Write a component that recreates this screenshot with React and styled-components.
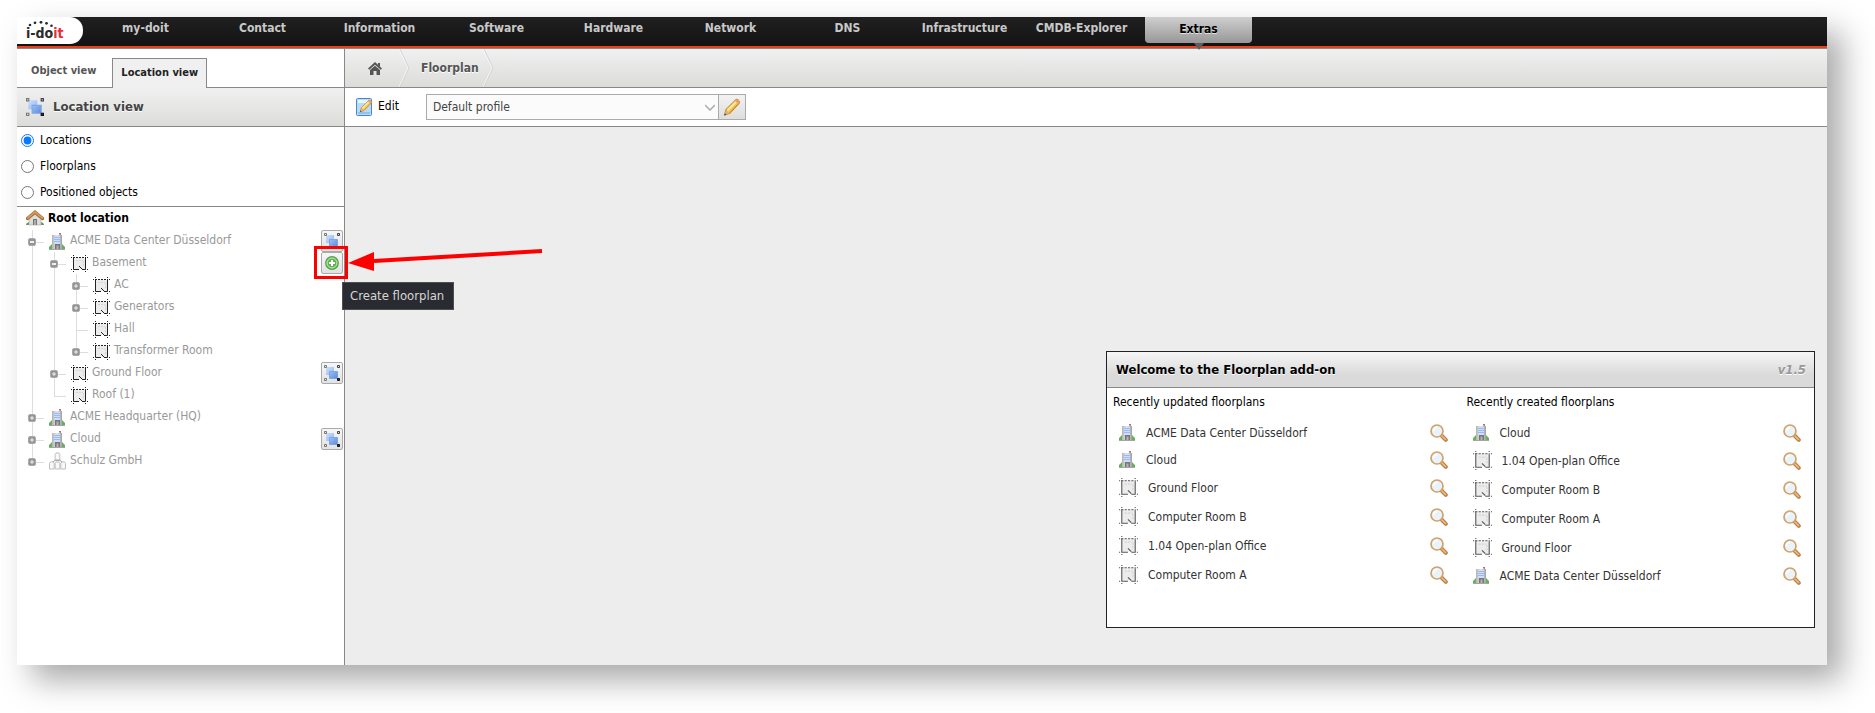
import React, { useState } from "react";
import styled, { createGlobalStyle, css } from "styled-components";

const GlobalStyle = createGlobalStyle`
  *, *::before, *::after { box-sizing: border-box; }
  body {
    margin: 0;
    background: #fff;
    color: #000;
    font: 12px/16px "DejaVu Sans Condensed", "DejaVu Sans", Tahoma, sans-serif;
  }
  button, select, input { font: inherit; color: inherit; }
  ul { list-style: none; margin: 0; padding: 0; }
  a { color: inherit; text-decoration: none; }
  svg { display: block; flex: none; }
`;

const line = "#888";
const softGradient = "linear-gradient(#f0f0f0, #dcdcda)";

/* ---------- frame ---------- */

const Frame = styled.div`
  display: flex;
  flex-direction: column;
  min-height: calc(100vh - 65px);
  margin: 17px 48px 48px 17px;
  background: #fff;
  box-shadow: 15px 15px 30px rgba(0, 0, 0, 0.34);
`;

const Columns = styled.div`
  display: flex;
  flex: 1;
`;

/* ---------- top navigation ---------- */

const TopBar = styled.header`
  position: relative;
  z-index: 2;
  display: flex;
  height: 32px;
  background: linear-gradient(#202020, #121212);
  border-bottom: 1px solid ${line};
  box-shadow: inset 0 -2px 0 #e8401c;
`;

const LogoPlate = styled.a`
  width: 66px;
  height: 27px;
  margin-right: 4px;
  padding: 4px 0 0 9px;
  border-radius: 0 13px 13px 0;
  background: #fff;
  display: grid;
  grid-template-rows: 4px 16px;
`;

const LogoText = styled.span`
  font: bold 14px/16px "DejaVu Sans Condensed", sans-serif;
  color: #2b2b2b;
  em { font-style: normal; color: #ee2a35; }
`;

const Nav = styled.nav`
  display: flex;
  align-items: flex-start;
  gap: 10px;
  padding-left: 5px;
`;

const NavItem = styled.a`
  position: relative;
  width: 107px;
  height: 26px;
  line-height: 23px;
  text-align: center;
  font-weight: bold;
  color: #c8c8c8;
  white-space: nowrap;
  ${(p) =>
    p.$active &&
    css`
      line-height: 25px;
      color: #000;
      text-shadow: 0 1px 0 #e4e4e4;
      border-radius: 0 0 4px 4px;
      background: linear-gradient(#cfcfcf, #979797);
      &::after {
        content: "";
        position: absolute;
        left: 50%;
        top: 100%;
        margin-left: -5px;
        border: 5px solid transparent;
        border-top: 7px solid #5d5d5d;
        border-bottom: 0;
      }
    `}
`;

/* ---------- sidebar ---------- */

const Sidebar = styled.aside`
  position: relative;
  z-index: 1;
  flex: none;
  width: 328px;
  border-right: 1px solid ${line};
  background: #fff;
`;

const Tabs = styled.div`
  display: flex;
  align-items: flex-end;
  height: 39px;
  border-bottom: 1px solid ${line};
`;

const Tab = styled.button`
  height: 30px;
  margin-bottom: -1px;
  padding: 0 15px 5px 13px;
  border: 1px solid transparent;
  border-bottom: 0;
  background: none;
  font-size: 11px;
  font-weight: bold;
  color: #555;
  ${(p) =>
    p.$active &&
    css`
      padding: 0 8px 2px;
      border-color: ${line};
      background: #f0f0f0;
      color: #222;
    `}
`;

const SectionTitle = styled.h2`
  display: flex;
  align-items: center;
  gap: 9px;
  height: 39px;
  margin: 0;
  padding: 0 9px;
  border-bottom: 1px solid ${line};
  background: ${softGradient};
  font-size: 13px;
  line-height: 16px;
  color: #444;
  text-shadow: 0 1px 0 #fff;
`;

const FilterList = styled.div`
  padding: 0 0 1px 4px;
  border-bottom: 1px solid ${line};
`;

const FilterOption = styled.label`
  display: flex;
  align-items: center;
  gap: 6px;
  height: 26px;
  input { width: 13px; height: 13px; margin: 0; accent-color: #0b79ff; }
`;

const Root = styled.div`
  display: flex;
  align-items: center;
  gap: 4px;
  height: 22px;
  padding-left: 9px;
  font-weight: bold;
`;

const Tree = styled.ul`
  padding: 1px 1px 0 10px;
`;

const TreeRow = styled.li`
  display: flex;
  align-items: center;
  height: 22px;
  color: #999;
`;

/* Guide lines beside a node: a vertical stroke, a branch, or the last corner */
const guideImages = {
  pass: "linear-gradient(#ddd, #ddd)",
  tee: "linear-gradient(#ddd, #ddd), linear-gradient(#ddd, #ddd)",
  end: "linear-gradient(#ddd, #ddd), linear-gradient(#ddd, #ddd)",
};

const Guide = styled.span`
  flex: none;
  display: flex;
  width: 22px;
  height: 22px;
  padding: 8px 0 0 1px;
  background-image: ${(p) => guideImages[p.$kind]};
  background-repeat: no-repeat;
  background-position: 5px 0, 5px 12px;
  background-size: 1px ${(p) => (p.$kind === "end" ? "13px" : "22px")}, 12px 1px;
`;

const Expander = styled.button`
  display: grid;
  place-items: center;
  width: 8px;
  height: 8px;
  padding: 0;
  border: 1px solid #aaa;
  border-radius: 2px;
  background: #949494;
`;

const NodeLabel = styled.a`
  margin-left: 4px;
  margin-right: auto;
  line-height: 20px;
  height: 22px;
`;

const ActionSlot = styled.span`
  position: relative;
  flex: none;
`;

const IconButton = styled.button`
  display: grid;
  place-items: center;
  width: 22px;
  height: 22px;
  padding: 0;
  border: 1px solid #aaa;
  border-radius: 2px;
  background: linear-gradient(#f6f6f6, #e2e2e2);
`;

const Marker = styled.span`
  position: absolute;
  inset: -6px -5px -5px -7px;
  border: 3px solid #fe0000;
`;

const Arrow = styled.svg`
  position: absolute;
  left: 27px;
  top: -6px;
`;

const Tooltip = styled.span`
  position: absolute;
  left: 21px;
  top: 30px;
  padding: 4px 9px 4px 7px;
  border: 1px solid #4c4e52;
  background: #292b30;
  color: #d6d6d6;
  font-size: 13px;
  line-height: 18px;
  white-space: nowrap;
`;

/* ---------- main area ---------- */

const Main = styled.main`
  flex: 1;
  display: flex;
  flex-direction: column;
  min-width: 0;
  background: #ededed;
`;

const Breadcrumbs = styled.nav`
  display: flex;
  align-items: center;
  height: 39px;
  padding-left: 23px;
  border-bottom: 1px solid ${line};
  background: ${softGradient};
  font-weight: bold;
  color: #555;
  text-shadow: 0 1px 0 #fff;
`;

const Crumb = styled.a`
  display: flex;
  align-items: center;
  gap: ${(p) => p.$gap}px;
  margin-right: 11px;
  span { margin-bottom: 1px; }
`;

const Toolbar = styled.div`
  display: flex;
  align-items: center;
  gap: 27px;
  height: 39px;
  padding-left: 11px;
  border-bottom: 1px solid ${line};
  background: #fff;
`;

const EditButton = styled.button`
  display: flex;
  align-items: center;
  gap: 5px;
  height: 26px;
  padding: 0;
  border: 0;
  background: none;
  span { margin-bottom: 2px; }
`;

const ProfilePicker = styled.div`
  display: flex;
  height: 26px;
  border: 1px solid #aaa;
`;

const SelectBox = styled.div`
  display: grid;
  align-items: center;
  > * { grid-area: 1 / 1; }
  > svg { justify-self: end; margin-right: 3px; pointer-events: none; }
`;

const ProfileSelect = styled.select`
  width: 291px;
  height: 24px;
  padding: 0 24px 0 6px;
  border: 0;
  border-radius: 0;
  appearance: none;
  background: #fbfbfb;
  color: #444;
`;

const ProfileEdit = styled.button`
  display: grid;
  place-items: center;
  width: 27px;
  height: 24px;
  padding: 0;
  border: 0;
  border-left: 1px solid #aaa;
  background: linear-gradient(#f2f2f2, #dedede);
`;

const Canvas = styled.div`
  flex: 1;
  display: flex;
  align-items: flex-end;
  justify-content: flex-end;
  padding: 0 12px 37px;
`;

const Welcome = styled.section`
  width: 709px;
  border: 1px solid #222;
  background: #fff;
`;

const WelcomeHead = styled.header`
  display: flex;
  justify-content: space-between;
  align-items: center;
  height: 36px;
  padding: 0 8px 0 9px;
  border-bottom: 1px solid ${line};
  background: linear-gradient(#f6f6f6, #dadada 65%);
  font-size: 13px;
  text-shadow: 0 1px 0 #fff;
  h1 { margin: 0; font-size: 13px; line-height: 16px; }
  em { font-weight: bold; color: #999; }
`;

const WelcomeColumns = styled.div`
  display: grid;
  grid-template-columns: 1fr 1fr;
  padding-bottom: 38px;
`;

const RecentTitle = styled.h3`
  margin: 0;
  padding: 6px 6px 9px;
  font-size: 12px;
  font-weight: normal;
  line-height: 16px;
`;

const RecentRow = styled.li`
  display: flex;
  align-items: center;
  gap: 10px;
  height: ${(p) => (p.$room ? 29 : 27)}px;
  padding: 0 13px 0 12px;
  color: #333;
  a { margin-right: auto; }
`;

const PlainButton = styled.button`
  padding: 0;
  border: 0;
  background: none;
`;

/* ---------- drawings ---------- */

const BuildingIcon = () => (
  <svg width="17" height="17" viewBox="0 0 17 17" aria-hidden="true">
    <defs>
      <linearGradient id="wall" x1="0" x2="1">
        <stop offset="0" stopColor="#b4b4b4" />
        <stop offset=".5" stopColor="#e4e6ea" />
        <stop offset="1" stopColor="#a0a0a0" />
      </linearGradient>
    </defs>
    <path d="M0 16v-2l3-3v5zM16 16v-2l-3-3v5z" fill="#66b05c" />
    <path d="M3 2h10v14H3z" fill="url(#wall)" />
    <path d="M0 16h16v1H0z" fill="#a5a5a5" />
    <path d="M5 3h6v8H5z" fill="#cfdffb" />
    <path d="M5 4.500h6M5 6.500h6M5 8.500h6" stroke="#98b9f1" />
    <path d="M6 11h5v5H6z" fill="#777" />
    <path d="M7.500 12.500h2V16h-2z" fill="#b5b5b5" />
    <path d="M11.500 2V0" stroke="#999" />
    <path d="M10 0h1.500v1.500H10z" fill="#d9534f" />
  </svg>
);

const RoomIcon = ({ size = 17, color = "#222" }) => (
  <svg width={size} height={size} viewBox="0 0 17 17" aria-hidden="true">
    <path d="M3 3h11v11H3z" fill="#ececec" />
    <path d="M2.500 2v12.500H8M11 14.500h3.500V3" fill="none" stroke={color} />
    <path d="M2 2.500h13" stroke={color} strokeDasharray="2 1" />
    <path d="M8 11l3 3" stroke={color} fill="none" />
    <path d="M5 5.500h7M12.500 6v5" stroke="#d4d4d4" strokeDasharray="2 1" />
    <path
      d="M2 0h1v1H2zM14 0h1v1h-1zM0 2h1v1H0zM16 2h1v1h-1zM0 14h1v1H0zM16 14h1v1h-1zM2 16h1v1H2zM14 16h1v1h-1z"
      fill={color}
    />
  </svg>
);

const ClusterIcon = () => (
  <svg width="17" height="18" viewBox="0 0 18 18" aria-hidden="true" fill="#f8f8f8" stroke="#bbb">
    <path d="M6.500 8.500V2l1-1.500h3l1 1.500v6.500z" />
    <path d="M4 10l3-2h4l3 2" fill="none" stroke="#999" />
    <path d="M.5 17.500v-6l1-1.500h3l1 1.500v6zM6.500 17.500v-6l1-1.500h3l1 1.500v6zM12.500 17.500v-6l1-1.500h3l1 1.500v6z" />
  </svg>
);

const RootIcon = () => (
  <svg width="18" height="16" viewBox="0 0 18 16" aria-hidden="true">
    <path d="M0 15c0-2 2-3 4-3h10c2 0 4 1 4 3z" fill="#5d9c4c" />
    <path d="M3 8l6-5 6 5v7H3z" fill="#dcdcdc" stroke="#aaa" strokeWidth=".6" />
    <path d="M7 9h4v6H7z" fill="#777" />
    <path d="M8 10h2v5H8z" fill="#aaa" />
    <path d="M1.500 8.500L9 2.300l7.500 6.200" fill="none" stroke="#9a6733" strokeWidth="3.400" strokeLinecap="round" />
    <path d="M1.800 8L9 2l7.200 6" fill="none" stroke="#d49a5c" strokeWidth="2" strokeLinecap="round" />
  </svg>
);

const ShapesIcon = ({ size = 16 }) => (
  <svg width={size} height={size} viewBox="0 0 16 16" aria-hidden="true">
    <defs>
      <linearGradient id="shapeBack" x1="0" y1="0" x2="1" y2="1">
        <stop offset="0" stopColor="#cfe0ff" />
        <stop offset="1" stopColor="#8fb4f0" />
      </linearGradient>
      <linearGradient id="shapeFront" x1="0" y1="0" x2="1" y2="1">
        <stop offset="0" stopColor="#9dbff6" />
        <stop offset="1" stopColor="#5c8bdb" />
      </linearGradient>
    </defs>
    <path d="M2 2h8v8H2z" fill="url(#shapeBack)" />
    <path d="M5.500 6.500h8v7h-8z" fill="url(#shapeFront)" stroke="#7da6e8" />
    <path d="M.5.5h2v2h-2zM.5 13.500h2v2h-2z" fill="#eee" stroke="#777" />
    <path d="M13.500.5h2v2h-2z" fill="#ddd" stroke="#444" />
    <path d="M13.500 13.500h2v2h-2z" fill="#333" stroke="#111" />
  </svg>
);

const AddIcon = () => (
  <svg width="14" height="14" viewBox="0 0 14 14" aria-hidden="true">
    <circle cx="7" cy="7" r="6.300" fill="#8ccf7c" stroke="#54a048" strokeWidth="1.200" />
    <circle cx="7" cy="7" r="4.800" fill="#62b053" stroke="#c5e8bb" strokeWidth=".8" />
    <path d="M7 4v6M4 7h6" stroke="#fff" strokeWidth="2" />
  </svg>
);

const PencilShape = () => (
  <g>
    <path d="M1.500 15l1-4.500L11.500 1.500c1-1 4 1.500 3 3L6 13.500z" fill="#f2c14e" stroke="#c98a2d" />
    <path d="M4 11l8-8" stroke="#fde79a" strokeWidth="2" />
    <path d="M1.200 15.300l1.300-4.500 3 3z" fill="#dcae7e" />
    <path d="M1 15.500l.7-2 1.400 1.300z" fill="#444" />
    <path d="M11.500 1.500c1-1 4 1.500 3 3l-1 1-3-3z" fill="#e6a469" />
  </g>
);

const PencilIcon = () => (
  <svg width="18" height="18" viewBox="0 0 16 16" aria-hidden="true">
    <PencilShape />
  </svg>
);

const EditIcon = () => (
  <svg width="17" height="18" viewBox="0 0 17 18" aria-hidden="true">
    <rect x=".5" y=".5" width="15" height="17" rx="1" fill="#b7dcfa" stroke="#4a86cf" />
    <path d="M2 2h12v3H2z" fill="#e6f4ff" />
    <path d="M2 14h12v2H2z" fill="#8cc4f2" />
    <g transform="translate(3 1) scale(.85)">
      <PencilShape />
    </g>
  </svg>
);

const LensIcon = () => (
  <svg width="18" height="18" viewBox="0 0 18 18" aria-hidden="true">
    <path d="M11.500 11.500l4.300 4.300" stroke="#bd7f4c" strokeWidth="4" strokeLinecap="round" />
    <path d="M12 12l3.500 3.500" stroke="#ebbf7c" strokeWidth="1.600" strokeLinecap="round" />
    <circle cx="7" cy="7" r="6" fill="#e9f3fd" stroke="#d2a266" strokeWidth="1.700" />
    <path d="M3.500 7A3.500 3.500 0 0 1 7 3.500" fill="none" stroke="#fff" strokeWidth="1.300" />
  </svg>
);

const HomeIcon = () => (
  <svg width="14" height="13" viewBox="0 0 14 13" aria-hidden="true" fill="#555">
    <path d="M7 0l7 6.500-1.200 1.300L7 2.700 1.200 7.800 0 6.500z" />
    <path d="M2 8l5-4.300L12 8v5H8.500V9h-3v4H2zM10 1h2v4l-2-2z" />
  </svg>
);

const CrumbEdge = () => (
  <svg width="11" height="38" viewBox="0 0 11 38" aria-hidden="true">
    <path d="M0 0l9 19-9 19" fill="none" stroke="#fff" opacity=".7" />
    <path d="M1 0l9 19-9 19" fill="none" stroke="#d4d4d4" />
  </svg>
);

const ChevronIcon = () => (
  <svg width="10" height="7" viewBox="0 0 10 7" aria-hidden="true">
    <path d="M0 1l5 5 5-5" fill="none" stroke="#aaa" strokeWidth="1.500" />
  </svg>
);

const LogoDots = () => (
  <svg width="30" height="9" viewBox="0 0 30 9" aria-hidden="true" fill="#2b2b2b">
    <circle cx="4" cy="4" r="1.300" />
    <circle cx="9" cy="1.800" r="1.400" />
    <circle cx="15" cy="1.300" r="1.400" />
    <circle cx="20.500" cy="2.300" r="1.400" />
    <circle cx="25.500" cy="4.800" r="1.300" />
  </svg>
);

const ToggleMark = ({ open }) => (
  <svg width="4" height="4" viewBox="0 0 4 4" aria-hidden="true">
    <path d={open ? "M0 1h4v2H0z" : "M0 1.500h1.500V0h1v1.500H4v1H2.500V4h-1V2.500H0z"} fill="#eee" />
  </svg>
);

/* ---------- data ---------- */

const navItems = [
  "my-doit", "Contact", "Information", "Software", "Hardware", "Network",
  "DNS", "Infrastructure", "CMDB-Explorer", "Extras",
];

const filters = ["Locations", "Floorplans", "Positioned objects"];

const nodes = [
  { name: "ACME Data Center Düsseldorf", icon: "building", guides: ["tee"], toggle: "open", action: "show" },
  { name: "Basement", icon: "room", guides: ["pass", "tee"], toggle: "open", action: "create" },
  { name: "AC", icon: "room", guides: ["pass", "pass", "tee"], toggle: "closed" },
  { name: "Generators", icon: "room", guides: ["pass", "pass", "tee"], toggle: "closed" },
  { name: "Hall", icon: "room", guides: ["pass", "pass", "tee"] },
  { name: "Transformer Room", icon: "room", guides: ["pass", "pass", "end"], toggle: "closed" },
  { name: "Ground Floor", icon: "room", guides: ["pass", "tee"], toggle: "closed", action: "show" },
  { name: "Roof (1)", icon: "room", guides: ["pass", "end"] },
  { name: "ACME Headquarter (HQ)", icon: "building", guides: ["tee"], toggle: "closed" },
  { name: "Cloud", icon: "building", guides: ["tee"], toggle: "closed", action: "show" },
  { name: "Schulz GmbH", icon: "cluster", guides: ["end"], toggle: "closed" },
];

const updated = [
  ["building", "ACME Data Center Düsseldorf"], ["building", "Cloud"], ["room", "Ground Floor"],
  ["room", "Computer Room B"], ["room", "1.04 Open-plan Office"], ["room", "Computer Room A"],
];

const created = [
  ["building", "Cloud"], ["room", "1.04 Open-plan Office"], ["room", "Computer Room B"],
  ["room", "Computer Room A"], ["room", "Ground Floor"], ["building", "ACME Data Center Düsseldorf"],
];

const NodeIcon = ({ kind }) =>
  kind === "building" ? <BuildingIcon /> : kind === "cluster" ? <ClusterIcon /> : <RoomIcon />;

/* ---------- composed parts ---------- */

const CreateAction = () => (
  <ActionSlot>
    <IconButton aria-label="Create floorplan" aria-describedby="create-tip"><AddIcon /></IconButton>
    <Marker />
    <Arrow width="196" height="32" viewBox="0 0 196 32" aria-hidden="true">
      <path d="M26 15L194 5" stroke="#fe0000" strokeWidth="4" />
      <path d="M0 17L26 6v19z" fill="#fe0000" />
    </Arrow>
    <Tooltip id="create-tip" role="tooltip">Create floorplan</Tooltip>
  </ActionSlot>
);

const Node = ({ node }) => (
  <TreeRow>
    {node.guides.map((kind, i) => (
      <Guide key={i} $kind={kind}>
        {node.toggle && i === node.guides.length - 1 && (
          <Expander aria-label={`Toggle ${node.name}`} aria-expanded={node.toggle === "open"}>
            <ToggleMark open={node.toggle === "open"} />
          </Expander>
        )}
      </Guide>
    ))}
    <NodeIcon kind={node.icon} />
    <NodeLabel href="#">{node.name}</NodeLabel>
    {node.action === "show" && (
      <IconButton aria-label={`Open floorplan of ${node.name}`}><ShapesIcon /></IconButton>
    )}
    {node.action === "create" && <CreateAction />}
  </TreeRow>
);

const RecentList = ({ title, items }) => (
  <div>
    <RecentTitle>{title}</RecentTitle>
    <ul>
      {items.map(([kind, name]) => (
        <RecentRow key={name} $room={kind === "room"}>
          {kind === "room" ? <RoomIcon size={19} color="#555" /> : <BuildingIcon />}
          <a href="#">{name}</a>
          <PlainButton aria-label={`Show ${name}`}><LensIcon /></PlainButton>
        </RecentRow>
      ))}
    </ul>
  </div>
);

export default function App() {
  const [filter, setFilter] = useState("Locations");
  return (
    <>
      <GlobalStyle />
      <Frame>
        <TopBar>
          <LogoPlate href="#">
            <LogoDots />
            <LogoText>i-do<em>it</em></LogoText>
          </LogoPlate>
          <Nav>
            {navItems.map((name) => (
              <NavItem key={name} href="#" $active={name === "Extras"}>{name}</NavItem>
            ))}
          </Nav>
        </TopBar>
        <Columns>
          <Sidebar>
            <Tabs>
              <Tab>Object view</Tab>
              <Tab $active>Location view</Tab>
            </Tabs>
            <SectionTitle><ShapesIcon size={18} />Location view</SectionTitle>
            <FilterList>
              {filters.map((name) => (
                <FilterOption key={name}>
                  <input type="radio" name="filter" checked={filter === name} onChange={() => setFilter(name)} />
                  {name}
                </FilterOption>
              ))}
            </FilterList>
            <Root><RootIcon />Root location</Root>
            <Tree>
              {nodes.map((node) => <Node key={node.name} node={node} />)}
            </Tree>
          </Sidebar>
          <Main>
            <Breadcrumbs>
              <Crumb href="#" aria-label="Home" $gap={17}><HomeIcon /><CrumbEdge /></Crumb>
              <Crumb href="#" $gap={4}><span>Floorplan</span><CrumbEdge /></Crumb>
            </Breadcrumbs>
            <Toolbar>
              <EditButton><EditIcon /><span>Edit</span></EditButton>
              <ProfilePicker>
                <SelectBox>
                  <ProfileSelect aria-label="Profile"><option>Default profile</option></ProfileSelect>
                  <ChevronIcon />
                </SelectBox>
                <ProfileEdit aria-label="Edit profile"><PencilIcon /></ProfileEdit>
              </ProfilePicker>
            </Toolbar>
            <Canvas>
              <Welcome>
                <WelcomeHead><h1>Welcome to the Floorplan add-on</h1><em>v1.5</em></WelcomeHead>
                <WelcomeColumns>
                  <RecentList title="Recently updated floorplans" items={updated} />
                  <RecentList title="Recently created floorplans" items={created} />
                </WelcomeColumns>
              </Welcome>
            </Canvas>
          </Main>
        </Columns>
      </Frame>
    </>
  );
}
